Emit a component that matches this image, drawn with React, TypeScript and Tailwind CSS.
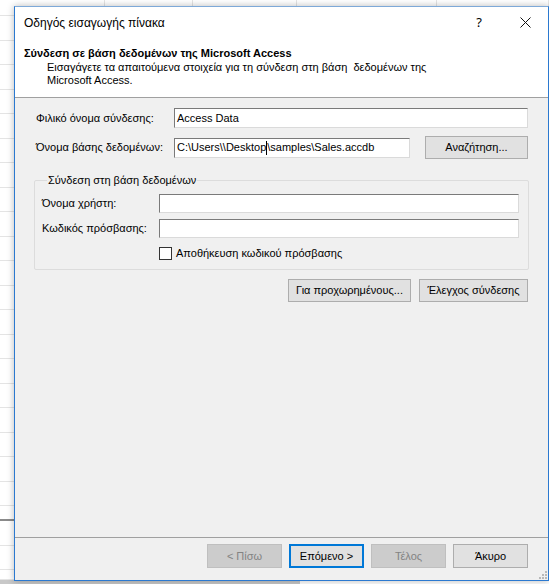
import React from "react";

const colW = [105, 88, 104, 140, 112];

function SheetRow({ h, dark = false, band = false }: { h: string; dark?: boolean; band?: boolean }) {
  return (
    <div
      className={`flex shrink-0 ${h} ${dark ? "border-b-[2px] border-[#8a8a8a]" : "border-b border-[#e4e4e4]"} ${band ? "bg-[#c8c8c8]" : ""}`}
    >
      {colW.map((w, j) => (
        <div key={j} className="h-full shrink-0 border-r border-[#e4e4e4]" style={{ width: w }} />
      ))}
    </div>
  );
}

function Sheet() {
  const rows = Array.from({ length: 20 });
  return (
    <div className="absolute inset-0 flex flex-col bg-white">
      <SheetRow h="h-[16px]" />
      {rows.map((_, i) => (
        <SheetRow key={i} h="h-[24.5px]" />
      ))}
      <SheetRow h="h-[15px]" dark />
      <SheetRow h="h-[24.5px]" />
      <SheetRow h="h-[24.5px]" />
      <SheetRow h="h-[10px]" />
      <div className="flex h-[10px] shrink-0">
        <div className="h-full w-[300px] bg-[#c8c8c8]" />
      </div>
    </div>
  );
}

function Btn({
  children,
  className = "",
  disabled = false,
  primary = false,
}: {
  children: React.ReactNode;
  className?: string;
  disabled?: boolean;
  primary?: boolean;
}) {
  const base = "flex items-center justify-center text-[11px] leading-none";
  const look = disabled
    ? "bg-[#cccccc] border border-[#bfbfbf] text-[#838383]"
    : primary
    ? "bg-[#e1e1e1] border-[2px] border-[#0078d7] text-black"
    : "bg-[#e1e1e1] border border-[#adadad] text-black";
  return <div className={`${base} ${look} ${className}`}>{children}</div>;
}

function TextBox({ children, className = "" }: { children?: React.ReactNode; className?: string }) {
  return (
    <div
      className={`flex items-center bg-white border border-t-[#7a7a7a] border-l-[#7a7a7a] border-r-[#dadada] border-b-[#dadada] pl-[2px] text-[11px] leading-none text-black whitespace-pre ${className}`}
    >
      {children}
    </div>
  );
}

export default function App() {
  return (
    <div className="relative w-[549px] h-[584px] overflow-hidden bg-white font-['Liberation_Sans',Arial,sans-serif]">
      <Sheet />
      <div className="absolute left-[14px] top-[6px] w-[535px] h-[575px] flex flex-col bg-[#f0f0f0] border border-[#2b79d0] border-t-[#7ea9d8] shadow-[0_0_7px_rgba(0,0,0,0.28)]">
        {/* title bar */}
        <div className="flex h-[31px] shrink-0 items-center bg-white">
          <div className="pl-[9px] text-[12px] text-black">Οδηγός εισαγωγής πίνακα</div>
          <div className="ml-auto flex h-full">
            <div className="flex w-[46px] items-center justify-center text-[13px] text-black font-['Noto_Sans',sans-serif]">?</div>
            <div className="flex w-[46px] items-center justify-center">
              <svg width="11" height="11" viewBox="0 0 11 11">
                <path d="M0.5 0.5 L10.5 10.5 M10.5 0.5 L0.5 10.5" stroke="#111" strokeWidth="1" fill="none" />
              </svg>
            </div>
          </div>
        </div>
        {/* header */}
        <div className="h-[60px] shrink-0 bg-white border-b border-[#a0a0a0] pl-[9px] pt-[9px]">
          <div className="text-[11px] leading-[13px] font-bold text-black">
            Σύνδεση σε βάση δεδομένων της Microsoft Access
          </div>
          <div className="pl-[23px] pt-[1px] text-[11px] leading-[13px] text-black whitespace-pre">
            {"Εισαγάγετε τα απαιτούμενα στοιχεία για τη σύνδεση στη βάση  δεδομένων της\nMicrosoft Access."}
          </div>
        </div>
        {/* body */}
        <div className="flex-1 pl-[21px] pr-[20px] pt-[10px]">
          <div className="flex items-center">
            <div className="w-[138px] text-[11px] text-black">Φιλικό όνομα σύνδεσης:</div>
            <TextBox className="h-[20px] flex-1">Access Data</TextBox>
          </div>
          <div className="mt-[8px] flex items-center">
            <div className="w-[138px] text-[11px] text-black">Όνομα βάσης δεδομένων:</div>
            <TextBox className="h-[20px] w-[236px]">
              {"C:\\Users\\\\Desktop"}
              <span className="inline-block h-[14px] w-px bg-black" />
              {"\\samples\\Sales.accdb"}
            </TextBox>
            <Btn className="ml-[15px] h-[23px] flex-1">Αναζήτηση...</Btn>
          </div>
          <fieldset className="mt-[15px] ml-[-2px] mr-[-1px] border border-[#dcdcdc] rounded-[2px] pl-[7px] pr-[9px] pb-[9px]">
            <legend className="ml-[5px] px-[1px] text-[11px] leading-[13px] text-black">
              Σύνδεση στη βάση δεδομένων
            </legend>
            <div className="mt-[7px] flex items-center">
              <div className="w-[117px] text-[11px] text-black">Όνομα χρήστη:</div>
              <TextBox className="h-[19px] flex-1" />
            </div>
            <div className="mt-[6px] flex items-center">
              <div className="w-[117px] text-[11px] text-black">Κωδικός πρόσβασης:</div>
              <TextBox className="h-[19px] flex-1" />
            </div>
            <div className="mt-[9px] flex items-center pl-[117px]">
              <div className="h-[13px] w-[13px] border border-[#333333] bg-white" />
              <div className="ml-[4px] text-[11px] leading-[13px] text-black">Αποθήκευση κωδικού πρόσβασης</div>
            </div>
          </fieldset>
          <div className="mt-[9px] flex justify-end gap-[8px]">
            <Btn className="h-[23px] w-[123px]">Για προχωρημένους...</Btn>
            <Btn className="h-[23px] w-[109px]">Έλεγχος σύνδεσης</Btn>
          </div>
        </div>
        {/* footer */}
        <div className="relative h-[43px] shrink-0 border-t border-[#a0a0a0] pt-[6px] pr-[20px]">
          <div className="flex justify-end gap-[7px]">
            <Btn disabled className="h-[24px] w-[75px]">&lt; Πίσω</Btn>
            <Btn primary className="h-[24px] w-[75px]">Επόμενο &gt;</Btn>
            <Btn disabled className="h-[24px] w-[75px]">Τέλος</Btn>
            <Btn className="h-[24px] w-[75px]">Άκυρο</Btn>
          </div>
          <svg className="absolute right-[1px] bottom-[1px]" width="8" height="8" viewBox="0 0 8 8">
            <rect x="6" y="0" width="2" height="2" fill="#b8b8b8" />
            <rect x="3" y="3" width="2" height="2" fill="#b8b8b8" />
            <rect x="6" y="3" width="2" height="2" fill="#b8b8b8" />
            <rect x="0" y="6" width="2" height="2" fill="#b8b8b8" />
            <rect x="3" y="6" width="2" height="2" fill="#b8b8b8" />
            <rect x="6" y="6" width="2" height="2" fill="#b8b8b8" />
          </svg>
        </div>
      </div>
    </div>
  );
}
